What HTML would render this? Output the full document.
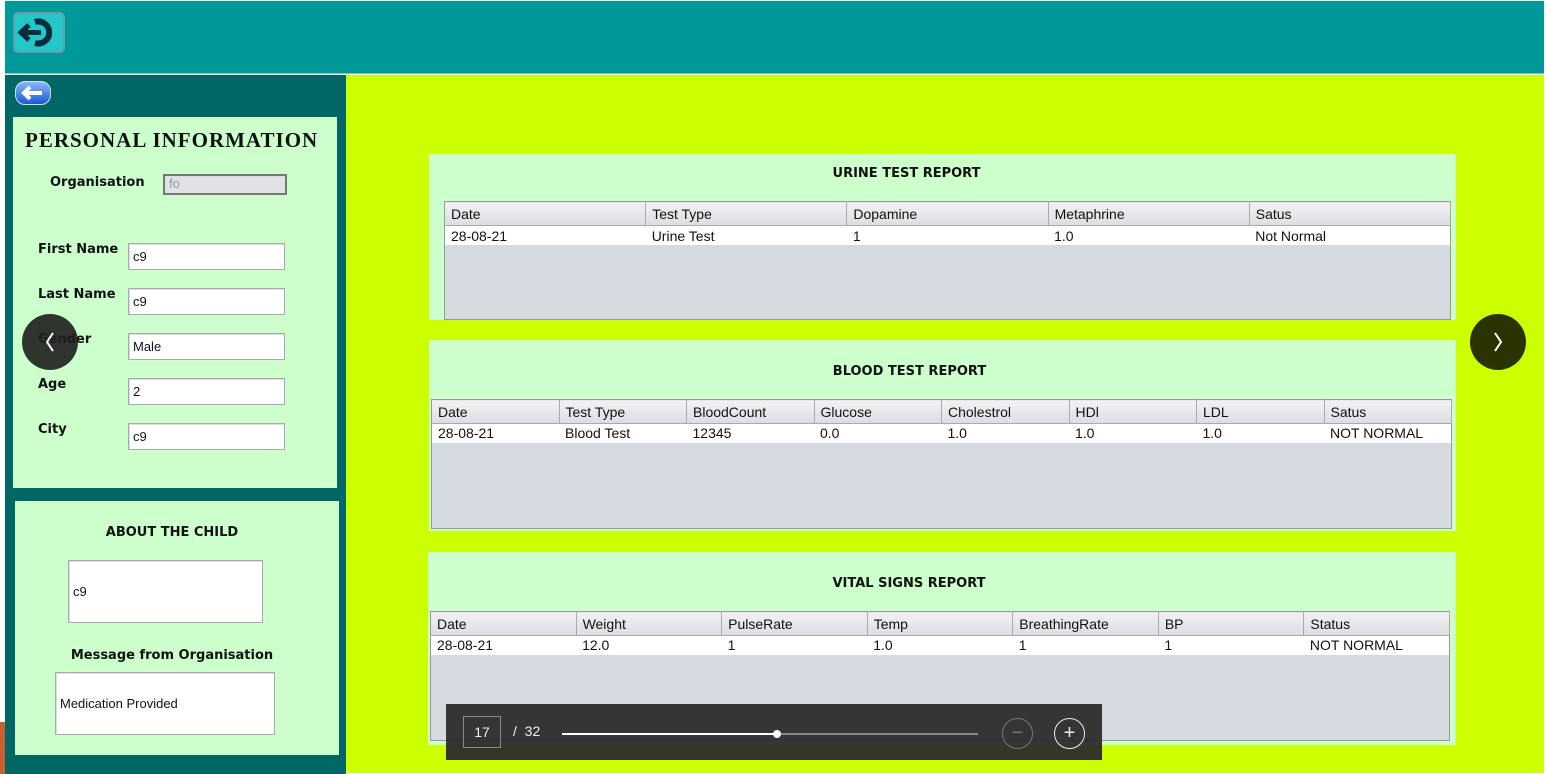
<!DOCTYPE html>
<html><head><meta charset="utf-8"><style>
*{margin:0;padding:0;box-sizing:border-box}
body{width:1546px;height:774px;position:relative;overflow:hidden;background:#fff;font-family:"Liberation Sans",Tahoma,sans-serif}
.a{position:absolute}
.top{left:5px;top:1px;width:1539px;height:73px;background:#009999;border-bottom:1px solid #7fc8c8}
.left{left:5px;top:75px;width:341px;height:699px;background:#006666}
.lime{left:346px;top:75px;width:1198px;height:698px;background:#ccff00}
.box{background:#ccffcc}
.lbl{font-family:"DejaVu Sans",sans-serif;font-weight:bold;font-size:13px;color:#111}
.inp{background:#fff;border:1px solid #aaa;box-shadow:inset 1px 1px 0 #ddd;font-size:13px;padding-left:4px;color:#112}
.panel{background:#ccffcc}
.ttl{font-family:"DejaVu Sans",sans-serif;font-weight:bold;font-size:13px;color:#111;text-align:center;position:absolute;left:0}
table{border-collapse:collapse;position:absolute;background:#d5d9e0;font-size:14px;color:#111;table-layout:fixed;border:1px solid #999}
th{font-weight:normal;text-align:left;padding-left:6px;height:24px;background:linear-gradient(#f2f2f4,#dcdde2);border-right:1px solid #aaa;border-bottom:1px solid #aaa}
td{background:#fff;height:19px;padding-left:6px}
.nav{width:56px;height:56px;border-radius:50%}
</style></head><body>
<div class="a top"></div>
<div class="a" style="left:13px;top:12px;width:52px;height:41px;border-radius:5px;background:#22c8c8;border:2px solid #6a9ab0">
<svg width="48" height="37" viewBox="0 0 48 37"><path d="M20 8 A11 11 0 1 1 20 29" fill="none" stroke="#0a2a40" stroke-width="6"/><path d="M8 18.5h18" stroke="#0a2a40" stroke-width="5"/><path d="M14 11 L6 18.5 L14 26" fill="none" stroke="#0a2a40" stroke-width="5"/></svg></div>
<div class="a left"></div>
<div class="a" style="left:15px;top:81px;width:36px;height:24px;border-radius:10px;background:linear-gradient(#8ab8ff,#1a5ad0);border:1px solid #ddd">
<svg width="34" height="22"><path d="M8 11h18M14 5 L8 11 L14 17" stroke="#fff" stroke-width="4" fill="none"/></svg></div>
<div class="a box" style="left:13px;top:117px;width:324px;height:371px"></div>
<div class="a" style="left:25px;top:128px;font-family:'Liberation Serif',serif;font-weight:bold;font-size:21px;letter-spacing:1px;color:#111">PERSONAL INFORMATION</div>
<div class="a lbl" style="left:50px;top:175px">Organisation</div>
<div class="a inp" style="left:163px;top:174px;width:124px;height:21px;background:#e0e2e6;border:2px solid #777;color:#999">fo</div>
<div class="a lbl" style="left:38px;top:242px">First Name</div>
<div class="a inp" style="left:128px;top:243px;width:157px;height:27px;line-height:26px">c9</div>
<div class="a lbl" style="left:38px;top:287px">Last Name</div>
<div class="a inp" style="left:128px;top:288px;width:157px;height:27px;line-height:26px">c9</div>
<div class="a lbl" style="left:38px;top:332px">Gender</div>
<div class="a inp" style="left:128px;top:333px;width:157px;height:27px;line-height:26px">Male</div>
<div class="a lbl" style="left:38px;top:377px">Age</div>
<div class="a inp" style="left:128px;top:378px;width:157px;height:27px;line-height:26px">2</div>
<div class="a lbl" style="left:38px;top:422px">City</div>
<div class="a inp" style="left:128px;top:423px;width:157px;height:27px;line-height:26px">c9</div>
<div class="a box" style="left:15px;top:501px;width:324px;height:254px"></div>
<div class="a lbl" style="left:15px;width:314px;text-align:center;top:525px">ABOUT THE CHILD</div>
<div class="a inp" style="left:68px;top:560px;width:195px;height:63px;line-height:62px">c9</div>
<div class="a lbl" style="left:15px;width:314px;text-align:center;top:648px">Message from Organisation</div>
<div class="a inp" style="left:55px;top:672px;width:220px;height:63px;line-height:62px">Medication Provided</div>
<div class="a" style="left:0;top:722px;width:5px;height:52px;background:#c86030"></div>
<div class="a lime"></div>

<div class="a panel" style="left:429px;top:154px;width:1027px;height:166px">
<div class="ttl" style="top:12px;right:72px">URINE TEST REPORT</div>
<table style="left:15px;top:47px;width:1007px;height:119px">
<tr><th>Date</th><th>Test Type</th><th>Dopamine</th><th>Metaphrine</th><th>Satus</th></tr>
<tr><td>28-08-21</td><td>Urine Test</td><td>1</td><td>1.0</td><td>Not Normal</td></tr>
<tr><td colspan="5" style="background:#d5d9e0;height:74px"></td></tr></table></div>

<div class="a panel" style="left:429px;top:340px;width:1027px;height:191px">
<div class="ttl" style="top:24px;right:66px">BLOOD TEST REPORT</div>
<table style="left:2px;top:59px;width:1021px;height:130px">
<tr><th>Date</th><th>Test Type</th><th>BloodCount</th><th>Glucose</th><th>Cholestrol</th><th>HDl</th><th>LDL</th><th>Satus</th></tr>
<tr><td>28-08-21</td><td>Blood Test</td><td>12345</td><td>0.0</td><td>1.0</td><td>1.0</td><td>1.0</td><td>NOT NORMAL</td></tr>
<tr><td colspan="8" style="background:#d5d9e0;height:86px"></td></tr></table></div>

<div class="a panel" style="left:428px;top:552px;width:1028px;height:193px">
<div class="ttl" style="top:24px;right:66px">VITAL SIGNS REPORT</div>
<table style="left:2px;top:59px;width:1020px;height:130px">
<tr><th>Date</th><th>Weight</th><th>PulseRate</th><th>Temp</th><th>BreathingRate</th><th>BP</th><th>Status</th></tr>
<tr><td>28-08-21</td><td>12.0</td><td>1</td><td>1.0</td><td>1</td><td>1</td><td>NOT NORMAL</td></tr>
<tr><td colspan="7" style="background:#d5d9e0;height:86px"></td></tr></table></div>

<div class="a nav" style="left:22px;top:314px;background:rgba(30,30,30,0.9)"><svg width="56" height="56"><path d="M31 19 L25 28 L31 37" stroke="#fff" stroke-width="2" fill="none"/></svg></div>
<div class="a nav" style="left:1470px;top:314px;background:#2a3300"><svg width="56" height="56"><path d="M25 19 L31 28 L25 37" stroke="#fff" stroke-width="2" fill="none"/></svg></div>

<div class="a" style="left:446px;top:704px;width:656px;height:56px;background:rgba(40,40,40,0.93)"></div>
<div class="a" style="left:463px;top:716px;width:38px;height:32px;border:1px solid #888;color:#eee;font-size:14px;text-align:center;line-height:30px">17</div>
<div class="a" style="left:513px;top:723px;color:#eee;font-size:14px">/&nbsp;&nbsp;32</div>
<div class="a" style="left:562px;top:733px;width:216px;height:2px;background:#fff"></div>
<div class="a" style="left:778px;top:733px;width:200px;height:2px;background:#888"></div>
<div class="a" style="left:773px;top:730px;width:8px;height:8px;border-radius:50%;background:#fff"></div>
<div class="a" style="left:1002px;top:718px;width:31px;height:31px;border-radius:50%;border:1px solid #777;color:#777;text-align:center;line-height:28px;font-size:20px">&minus;</div>
<div class="a" style="left:1054px;top:718px;width:31px;height:31px;border-radius:50%;border:1px solid #eee;color:#eee;text-align:center;line-height:28px;font-size:20px">+</div>
</body></html>
